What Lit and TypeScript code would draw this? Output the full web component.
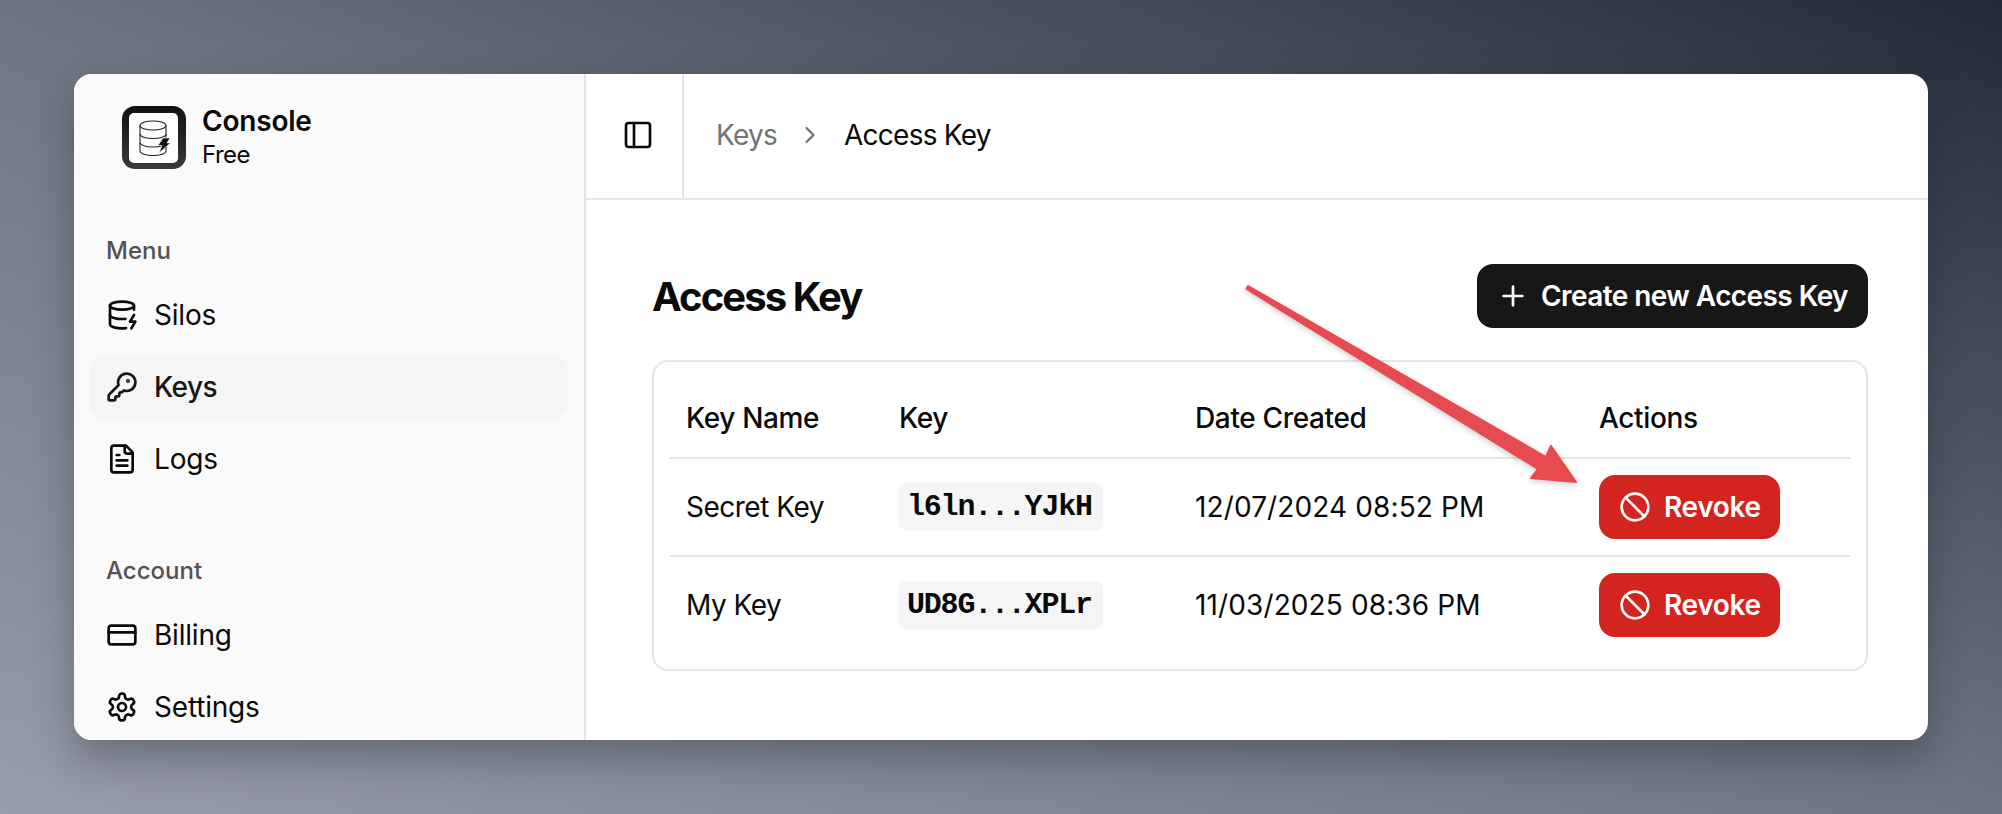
import { LitElement, html, css, svg } from "lit";
import { customElement } from "lit/decorators.js";

const ic = (body: unknown, cls = "ic") => html`<svg class=${cls} viewBox="0 0 24 24" fill="none" stroke="currentColor" stroke-width="2" stroke-linecap="round" stroke-linejoin="round">${body}</svg>`;

const icons = {
  db: svg`<ellipse cx="12" cy="5" rx="9" ry="3"/><path d="M3 5V19A9 3 0 0 0 15 21.84"/><path d="M21 5V8"/><path d="M21 12L18 17H22L19 22"/><path d="M3 12A9 3 0 0 0 14.59 14.87"/>`,
  key: svg`<path d="M2.586 17.414A2 2 0 0 0 2 18.828V21a1 1 0 0 0 1 1h3a1 1 0 0 0 1-1v-1a1 1 0 0 1 1-1h1a1 1 0 0 0 1-1v-1a1 1 0 0 1 1-1h.172a2 2 0 0 0 1.414-.586l.814-.814a6.5 6.5 0 1 0-4-4z"/><circle cx="16.5" cy="7.5" r=".5" fill="currentColor"/>`,
  file: svg`<path d="M15 2H6a2 2 0 0 0-2 2v16a2 2 0 0 0 2 2h12a2 2 0 0 0 2-2V7Z"/><path d="M14 2v4a2 2 0 0 0 2 2h4"/><path d="M10 9H8"/><path d="M16 13H8"/><path d="M16 17H8"/>`,
  card: svg`<rect width="20" height="14" x="2" y="5" rx="2"/><line x1="2" x2="22" y1="10" y2="10"/>`,
  gear: svg`<path d="M12.22 2h-.44a2 2 0 0 0-2 2v.18a2 2 0 0 1-1 1.73l-.43.25a2 2 0 0 1-2 0l-.15-.08a2 2 0 0 0-2.73.73l-.22.38a2 2 0 0 0 .73 2.73l.15.1a2 2 0 0 1 1 1.72v.51a2 2 0 0 1-1 1.74l-.15.09a2 2 0 0 0-.73 2.73l.22.38a2 2 0 0 0 2.73.73l.15-.08a2 2 0 0 1 2 0l.43.25a2 2 0 0 1 1 1.73V20a2 2 0 0 0 2 2h.44a2 2 0 0 0 2-2v-.18a2 2 0 0 1 1-1.73l.43-.25a2 2 0 0 1 2 0l.15.08a2 2 0 0 0 2.73-.73l.22-.39a2 2 0 0 0-.73-2.73l-.15-.08a2 2 0 0 1-1-1.74v-.5a2 2 0 0 1 1-1.74l.15-.09a2 2 0 0 0 .73-2.73l-.22-.38a2 2 0 0 0-2.73-.73l-.15.08a2 2 0 0 1-2 0l-.43-.25a2 2 0 0 1-1-1.73V4a2 2 0 0 0-2-2z"/><circle cx="12" cy="12" r="3"/>`,
  panel: svg`<rect width="18" height="18" x="3" y="3" rx="2"/><path d="M9 3v18"/>`,
  chev: svg`<path d="m9 18 6-6-6-6"/>`,
  plus: svg`<path d="M5 12h14"/><path d="M12 5v14"/>`,
  ban: svg`<circle cx="12" cy="12" r="10"/><path d="m4.9 4.9 14.2 14.2"/>`,
};

const menu = [
  { icon: icons.db, label: "Silos" },
  { icon: icons.key, label: "Keys", active: true },
  { icon: icons.file, label: "Logs" },
];
const account = [
  { icon: icons.card, label: "Billing" },
  { icon: icons.gear, label: "Settings" },
];
const rows = [
  { name: "Secret Key", key: "l6ln...YJkH", date: "12/07/2024 08:52 PM" },
  { name: "My Key", key: "UD8G...XPLr", date: "11/03/2025 08:36 PM" },
];

@customElement("app-root")
export class AppRoot extends LitElement {
  static styles = css`
    :host {
      display: block;
      width: 2002px;
      height: 814px;
      box-sizing: border-box;
      padding: 74px;
      position: relative;
      overflow: hidden;
      background: linear-gradient(to bottom left, #222a39 0%, #6c7581 50%, #979da9 100%);
      font-family: Inter, "Liberation Sans", sans-serif;
      color: #0a0a0a;
    }
    * { box-sizing: border-box; }
    .window {
      display: flex;
      height: 666px;
      border-radius: 18px;
      overflow: hidden;
      background: #fff;
      box-shadow: 0 18px 40px rgba(20, 25, 35, 0.32);
    }
    .side {
      width: 512px;
      flex: none;
      background: #fafafa;
      border-right: 2px solid #e5e5e5;
      padding: 32px 16px 0;
      overflow: hidden;
    }
    .brand { display: flex; align-items: center; gap: 16px; padding-left: 32px; height: 63px; }
    .logo { width: 64px; height: 63px; flex: none; }
    .brand-text { display: flex; flex-direction: column; }
    .brand-name { font-size: 28px; font-weight: 600; line-height: 32px; letter-spacing: -0.2px; }
    .brand-plan { font-size: 24px; line-height: 32px; margin-top: 2px; letter-spacing: -0.5px; }
    .label { font-size: 24px; font-weight: 500; color: #525252; height: 32px; line-height: 32px; padding-left: 16px; margin-bottom: 16px; }
    .label.menu { margin-top: 66px; }
    .label.acct { margin-top: 64px; }
    .nav { display: flex; flex-direction: column; gap: 8px; }
    .item { display: flex; align-items: center; gap: 16px; height: 64px; padding-left: 16px; border-radius: 16px; font-size: 28px; color: #0a0a0a; letter-spacing: -0.2px; }
    .item.active { background: #f5f5f5; font-weight: 500; color: #171717; letter-spacing: -0.55px; }
    .ic { width: 32px; height: 32px; flex: none; display: block; }
    .main { flex: 1; min-width: 0; display: flex; flex-direction: column; }
    .top { height: 126px; flex: none; display: flex; border-bottom: 2px solid #e5e5e5; }
    .toggle { width: 98px; flex: none; border-right: 2px solid #e5e5e5; display: flex; align-items: center; padding-left: 36px; padding-bottom: 2px; }
    .crumbs { display: flex; align-items: center; padding-left: 32px; font-size: 28px; padding-bottom: 2px; letter-spacing: -0.75px; }
    .crumbs .muted { color: #737373; }
    .crumbs .ic { color: #737373; margin: 0 20px 0 19px; width: 28px; height: 28px; }
    .content { padding: 64px 60px 0 66px; }
    .title-row { display: flex; justify-content: space-between; align-items: center; height: 64px; margin-bottom: 32px; }
    h1 { margin: 0; font-size: 40px; font-weight: 700; letter-spacing: -1.9px; }
    button { display: inline-flex; align-items: center; height: 64px; border: 0; border-radius: 16px; font: 600 28px Inter, sans-serif; color: #fff; padding: 0 20px; gap: 12px; }
    .create { background: #171717; letter-spacing: -0.58px; }
    .revoke { background: #d32420; width: 181px; gap: 13px; letter-spacing: -0.35px; }
    .card { border: 2px solid #e5e5e5; border-radius: 16px; padding: 16px; }
    .tr { display: grid; grid-template-columns: 213px 296px 404px 1fr; align-items: center; font-size: 28px; height: 98px; border-top: 2px solid #e5e5e5; letter-spacing: -0.5px; }
    .tr.head { height: 79px; border-top: 0; font-weight: 500; letter-spacing: -0.35px; }
    .tr > div { padding-left: 16px; }
    .tr > .date { letter-spacing: 0.12px; }
    .chip { display: block; width: 204px; height: 48px; padding-left: 8px; border-radius: 8px; background: #f5f5f5; font: 700 30px/48px "Liberation Mono", monospace; letter-spacing: -1.2px; }
    .tr > div.k { display: flex; }
    .arrow { position: absolute; left: 1230px; top: 270px; width: 360px; height: 230px; overflow: visible; filter: drop-shadow(0 2px 3px rgba(0,0,0,.2)); }
  `;

  render() {
    const navItem = (i: { icon: unknown; label: string; active?: boolean }) =>
      html`<div class="item ${i.active ? "active" : ""}">${ic(i.icon)}<span>${i.label}</span></div>`;
    return html`
      <div class="window">
        <aside class="side">
          <div class="brand">
            <svg class="logo" viewBox="0 0 64 63">
              <defs><linearGradient id="lg" x1="0" y1="0" x2="0" y2="1"><stop offset="0" stop-color="#111"/><stop offset="1" stop-color="#3a3a3a"/></linearGradient></defs>
              <rect width="64" height="63" rx="13" fill="url(#lg)"/>
              <rect x="7" y="7" width="49" height="50" rx="5" fill="#fff"/>
              <g fill="none" stroke="#222" stroke-width="1.1">
                <ellipse cx="31" cy="19.5" rx="13" ry="4.5"/>
                <path d="M18 19.5V45c0 2.5 5.8 4.5 13 4.5s13-2 13-4.5V19.5"/>
                <path d="M18 28c0 2.5 5.8 4.5 13 4.5s13-2 13-4.5"/>
                <path d="M18 36.500c0 2.500 5.800 4.500 13 4.500s13-2 13-4.500"/>
              </g>
              <path d="M41 32l7 0-3 5h3.500L37 47l3-7.500h-4z" fill="#111" stroke="#fff" stroke-width=".6"/>
            </svg>
            <div class="brand-text"><span class="brand-name">Console</span><span class="brand-plan">Free</span></div>
          </div>
          <div class="label menu">Menu</div>
          <div class="nav">${menu.map(navItem)}</div>
          <div class="label acct">Account</div>
          <div class="nav">${account.map(navItem)}</div>
        </aside>
        <main class="main">
          <div class="top">
            <div class="toggle">${ic(icons.panel)}</div>
            <div class="crumbs"><span class="muted">Keys</span>${ic(icons.chev)}<span>Access Key</span></div>
          </div>
          <div class="content">
            <div class="title-row">
              <h1>Access Key</h1>
              <button class="create">${ic(icons.plus)}<span>Create new Access Key</span></button>
            </div>
            <div class="card">
              <div class="tr head"><div>Key Name</div><div>Key</div><div>Date Created</div><div>Actions</div></div>
              ${rows.map(
                (r) => html`<div class="tr">
                  <div>${r.name}</div>
                  <div class="k"><span class="chip">${r.key}</span></div>
                  <div class="date">${r.date}</div>
                  <div><button class="revoke">${ic(icons.ban)}<span>Revoke</span></button></div>
                </div>`
              )}
            </div>
          </div>
        </main>
      </div>
      <svg class="arrow" viewBox="1230 270 360 230">
        <path d="M1248 286 L1546 457 L1551 446 L1576 482 L1531 478 L1538 469 L1246.5 289 Z" fill="#e54b50" stroke="#e54b50" stroke-width="2" stroke-linejoin="round"/>
      </svg>
    `;
  }
}
